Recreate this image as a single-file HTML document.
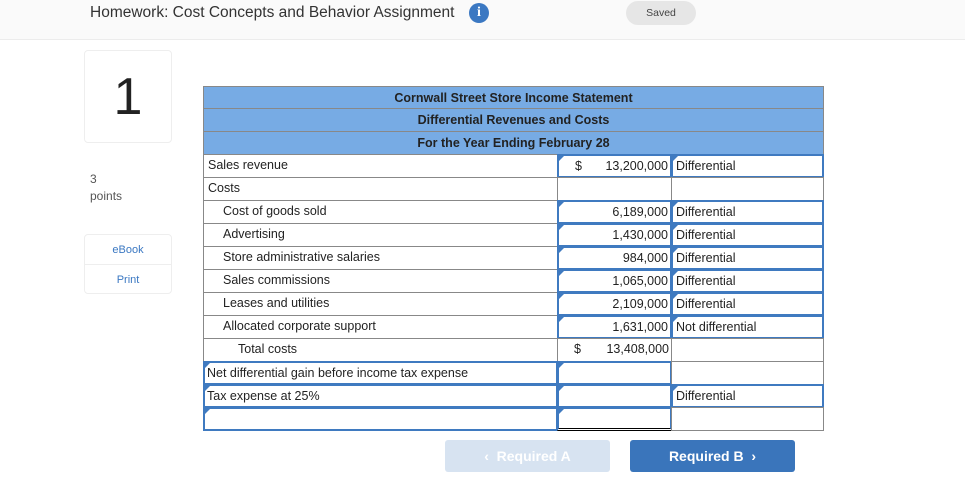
<!DOCTYPE html>
<html><head><style>
*{margin:0;padding:0;box-sizing:border-box}
body{width:965px;height:503px;background:#fff;font-family:"Liberation Sans",Arial,sans-serif;position:relative;overflow:hidden}
.top{position:absolute;left:0;top:0;width:965px;height:40px;background:#fafafa;border-bottom:1px solid #ececec}
.title{position:absolute;left:90px;top:4px;font-size:15.5px;color:#333}
.info{position:absolute;left:469px;top:3px;width:20px;height:20px;border-radius:50%;background:#3b78c2;color:#fff;font:bold 14px "Liberation Serif",serif;text-align:center;line-height:20px}
.saved{position:absolute;left:626px;top:1px;width:70px;height:24px;border-radius:12px;background:#e6e6e6;font-size:10.5px;color:#444;text-align:center;line-height:24px}
.qbox{position:absolute;left:84px;top:50px;width:88px;height:93px;border:1px solid #eee;border-radius:4px;font-size:52px;text-align:center;line-height:93px;color:#222}
.pts{position:absolute;left:90px;top:171px;font-size:12px;color:#555;line-height:17px}
.side{position:absolute;left:84px;top:234px;width:88px;height:60px;border:1px solid #eee;border-radius:4px}
.side div{height:30px;font-size:11px;color:#3b78c2;text-align:center;line-height:30px}
.side div:first-child{border-bottom:1px solid #eee}
.h{position:absolute;left:203px;width:621px;height:23px;background:#77abe4;border:1px solid #888;border-top:none;font-weight:bold;font-size:12.5px;color:#222;text-align:center;line-height:22px}
.c{position:absolute;height:24px;border:1px solid #888;font-size:12.5px;color:#222;line-height:21px;white-space:nowrap}
.in{border:2px solid #3f7ac0;}
.in::before{content:"";position:absolute;left:0;top:0;border-left:5px solid #3f7ac0;border-bottom:5px solid transparent}
.n{text-align:right;padding-right:2px}
.d{position:absolute;left:16px}
.btn{position:absolute;top:440px;width:165px;height:32px;border-radius:3px;font-weight:bold;font-size:14px;text-align:center;line-height:32px;color:#fff}
</style></head><body>
<div class="top"><div class="title">Homework: Cost Concepts and Behavior Assignment</div><div class="info">i</div><div class="saved">Saved</div></div>
<div class="qbox">1</div>
<div class="pts">3<br>points</div>
<div class="side"><div>eBook</div><div>Print</div></div>

<div class="h" style="top:86px;border-top:1px solid #888">Cornwall Street Store Income Statement</div>
<div class="h" style="top:109px">Differential Revenues and Costs</div>
<div class="h" style="top:132px">For the Year Ending February 28</div>

<div class="c" style="left:203px;top:154px;width:355px;padding-left:4px">Sales revenue</div>
<div class="c in n" style="left:557px;top:154px;width:115px"><span class="d">$</span>13,200,000</div>
<div class="c in" style="left:671px;top:154px;width:153px;padding-left:3px">Differential</div>

<div class="c" style="left:203px;top:177px;width:355px;padding-left:4px">Costs</div>
<div class="c" style="left:557px;top:177px;width:115px"></div>
<div class="c" style="left:671px;top:177px;width:153px"></div>

<div class="c" style="left:203px;top:200px;width:355px;padding-left:19px">Cost of goods sold</div>
<div class="c in n" style="left:557px;top:200px;width:115px">6,189,000</div>
<div class="c in" style="left:671px;top:200px;width:153px;padding-left:3px">Differential</div>

<div class="c" style="left:203px;top:223px;width:355px;padding-left:19px">Advertising</div>
<div class="c in n" style="left:557px;top:223px;width:115px">1,430,000</div>
<div class="c in" style="left:671px;top:223px;width:153px;padding-left:3px">Differential</div>

<div class="c" style="left:203px;top:246px;width:355px;padding-left:19px">Store administrative salaries</div>
<div class="c in n" style="left:557px;top:246px;width:115px">984,000</div>
<div class="c in" style="left:671px;top:246px;width:153px;padding-left:3px">Differential</div>

<div class="c" style="left:203px;top:269px;width:355px;padding-left:19px">Sales commissions</div>
<div class="c in n" style="left:557px;top:269px;width:115px">1,065,000</div>
<div class="c in" style="left:671px;top:269px;width:153px;padding-left:3px">Differential</div>

<div class="c" style="left:203px;top:292px;width:355px;padding-left:19px">Leases and utilities</div>
<div class="c in n" style="left:557px;top:292px;width:115px">2,109,000</div>
<div class="c in" style="left:671px;top:292px;width:153px;padding-left:3px">Differential</div>

<div class="c" style="left:203px;top:315px;width:355px;padding-left:19px">Allocated corporate support</div>
<div class="c in n" style="left:557px;top:315px;width:115px">1,631,000</div>
<div class="c in" style="left:671px;top:315px;width:153px;padding-left:3px">Not differential</div>

<div class="c" style="left:203px;top:338px;width:355px;padding-left:34px">Total costs</div>
<div class="c n" style="left:557px;top:338px;width:115px"><span class="d">$</span>13,408,000</div>
<div class="c" style="left:671px;top:338px;width:153px"></div>

<div class="c in" style="left:203px;top:361px;width:355px;padding-left:2px">Net differential gain before income tax expense</div>
<div class="c in" style="left:557px;top:361px;width:115px"></div>
<div class="c" style="left:671px;top:361px;width:153px"></div>

<div class="c in" style="left:203px;top:384px;width:355px;padding-left:2px">Tax expense at 25%</div>
<div class="c in" style="left:557px;top:384px;width:115px"></div>
<div class="c in" style="left:671px;top:384px;width:153px;padding-left:3px">Differential</div>

<div class="c in" style="left:203px;top:407px;width:355px"></div>
<div class="c in" style="left:557px;top:407px;width:115px;border-bottom:3px double #000"></div>
<div class="c" style="left:671px;top:407px;width:153px"></div>

<div class="btn" style="left:445px;background:#d7e3f1">&lsaquo;&nbsp; Required A</div>
<div class="btn" style="left:630px;background:#3a75bb">Required B &nbsp;&rsaquo;</div>
</body></html>
